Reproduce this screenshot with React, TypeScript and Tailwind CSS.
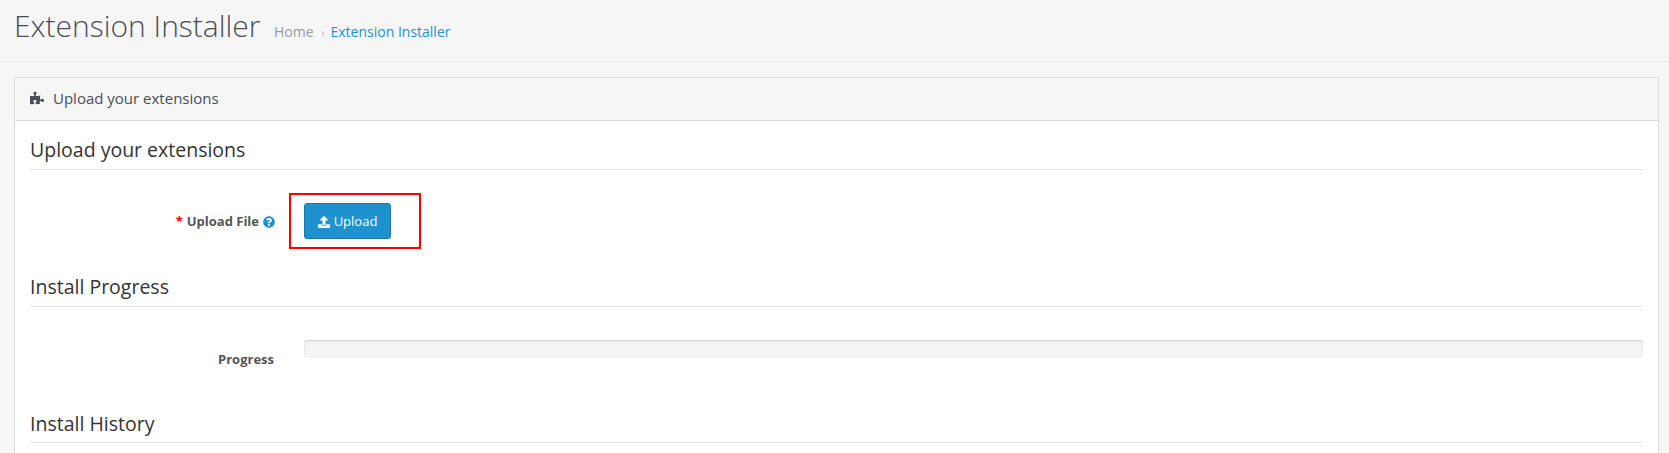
import type { ReactNode } from "react";
import { FaPuzzlePiece, FaQuestionCircle, FaUpload } from "react-icons/fa";

function Legend({ children }: { children: ReactNode }) {
  return (
    <h3 className="h-[34px] border-b border-[#e5e5e5] text-[19.5px] leading-[28px] text-[#333333]">
      {children}
    </h3>
  );
}

export default function App() {
  return (
    <div className="h-[453px] overflow-hidden bg-[#f6f6f6] font-['Open_Sans',sans-serif]">
      <header className="flex h-[62px] items-baseline border-b border-[#e8e8e8] pl-[14px] pt-[6px]">
        <h1 className="w-[260px] whitespace-nowrap text-[30px] font-light leading-[40px] text-[#4c4d5a]">
          Extension Installer
        </h1>
        <nav className="flex items-baseline whitespace-nowrap text-[14px] leading-[20px]">
          <a className="w-[47px] text-[#999999]">Home</a>
          <span className="w-[9.5px] text-[12px] text-[#bbbbbb]">›</span>
          <a className="text-[#1e91cf]">Extension Installer</a>
        </nav>
      </header>
      <main className="ml-[14px] mr-[10px] mt-[15px] h-[376px] border border-b-0 border-[#dcdcdc] bg-white">
        <div className="flex h-[43px] items-center border-b border-[#dcdcdc] bg-[#f6f6f6] pb-[3px] pl-[15px] text-[#4c4d5a]">
          <FaPuzzlePiece className="mr-[9px] size-[14px]" />
          <h2 className="text-[15px] leading-[20px]">Upload your extensions</h2>
        </div>
        <div className="px-[15px] pt-[15px]">
          <Legend>Upload your extensions</Legend>
          <div className="flex h-[103px] pt-[23px]">
            <div className="mt-[19px] flex h-[20px] w-[245px] items-center justify-end text-[13px] font-bold text-[#555555]">
              <span className="mr-[4px] text-[#ff0000]">*</span>
              Upload File
              <FaQuestionCircle className="ml-[4px] size-[12px] text-[#1e91cf]" />
            </div>
            <div className="ml-[14px] h-[56px] w-[132px] border-2 border-[#ff0000] pl-[13px] pt-[8px]">
              <button className="flex h-[36px] w-[87px] items-center justify-center gap-[4px] rounded-[3px] border border-[#1978ab] bg-[#1e91cf] pt-[2px] text-[13px] text-white">
                <FaUpload className="size-[12px]" />
                Upload
              </button>
            </div>
          </div>
          <Legend>Install Progress</Legend>
          <div className="flex h-[102px] pt-[33px]">
            <div className="mt-[9px] h-[20px] w-[244px] text-right text-[13px] font-bold leading-[20px] text-[#555555]">
              Progress
            </div>
            <div className="ml-[30px] h-[18px] flex-1 rounded-[3px] bg-[#f4f4f4] shadow-[inset_0_1px_2px_rgba(0,0,0,0.15)]" />
          </div>
          <div className="flex flex-col [&>h3]:leading-[30px]">
            <Legend>Install History</Legend>
          </div>
        </div>
      </main>
    </div>
  );
}
